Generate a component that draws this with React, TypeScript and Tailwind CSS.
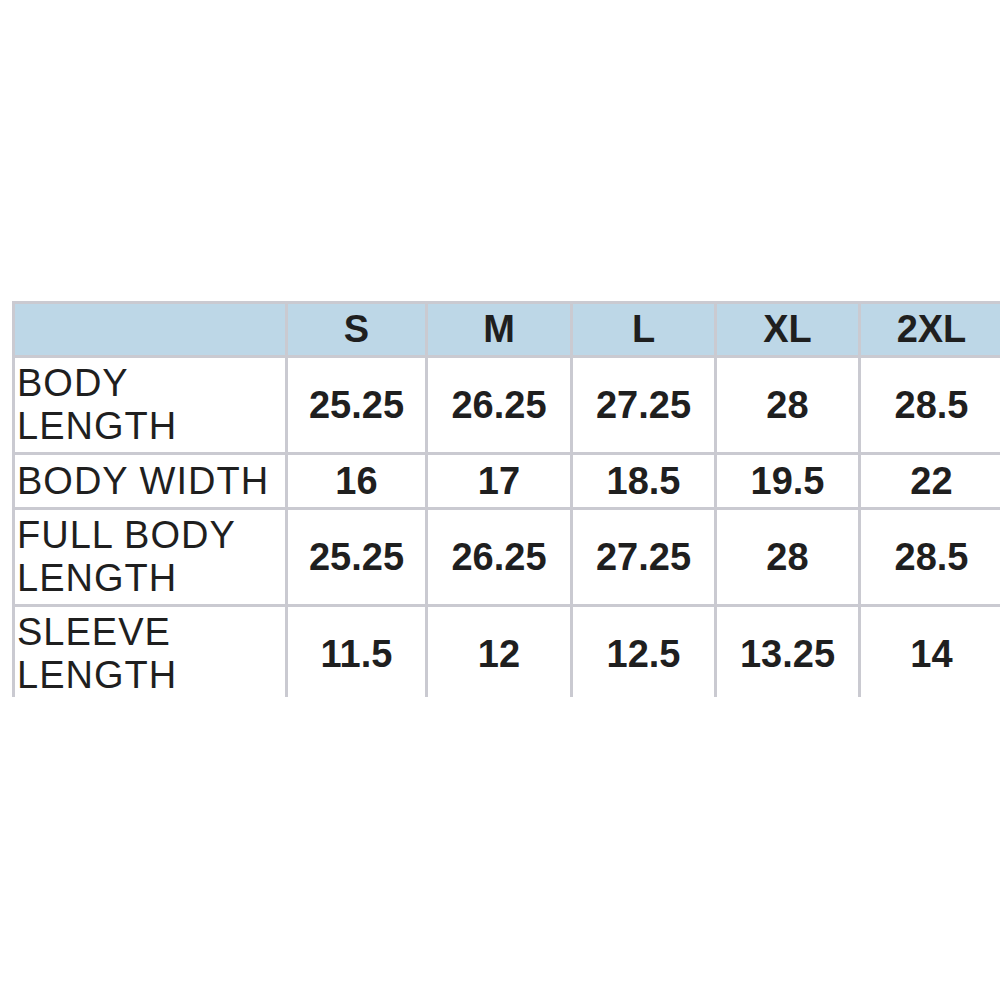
const sizes = ["S", "M", "L", "XL", "2XL"];

const rows: { label: string[]; values: string[] }[] = [
  { label: ["BODY", "LENGTH"], values: ["25.25", "26.25", "27.25", "28", "28.5"] },
  { label: ["BODY WIDTH"], values: ["16", "17", "18.5", "19.5", "22"] },
  { label: ["FULL BODY", "LENGTH"], values: ["25.25", "26.25", "27.25", "28", "28.5"] },
  { label: ["SLEEVE", "LENGTH"], values: ["11.5", "12", "12.5", "13.25", "14"] },
];

export default function App() {
  return (
    <div
      className="h-[1000px] w-[1000px] overflow-hidden bg-white pl-[12px] pt-[301px] text-[#1f1f1f]"
      style={{ fontFamily: '"Liberation Sans", Arial, sans-serif' }}
    >
      <div className="h-[396px] w-[990px] overflow-hidden">
        <div className="grid w-[990px] grid-cols-[270px_137px_142px_141px_141px_141px] grid-rows-[51px_94px_52px_94px_94px] gap-[3px] bg-[#cacad1] pl-[3px] pt-[3px] text-[38px] leading-[43px]">
          <div className="bg-[#bdd7e7]" />
          {sizes.map((s) => (
            <div key={s} className="flex items-center justify-center bg-[#bdd7e7] font-bold">
              {s}
            </div>
          ))}
          {rows.map((r, i) => (
            <div key={i} className="contents">
              <div className="flex flex-col justify-center bg-white pl-[2px] tracking-[1px]">
                {r.label.map((l) => (
                  <span key={l} className="block">
                    {l}
                  </span>
                ))}
              </div>
              {r.values.map((v, j) => (
                <div key={j} className="flex items-center justify-center bg-white font-bold">
                  {v}
                </div>
              ))}
            </div>
          ))}
        </div>
      </div>
    </div>
  );
}
